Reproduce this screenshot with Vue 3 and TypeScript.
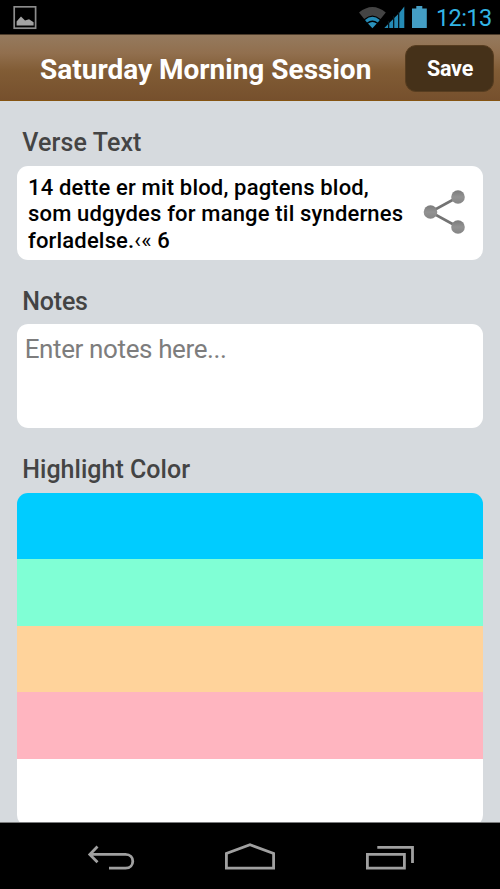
<script setup lang="ts">
import { ref } from 'vue'

const verseLines: string[] = [
  '14 dette er mit blod, pagtens blod,',
  'som udgydes for mange til syndernes',
]
const colors: string[] = ['#00ccff', '#80ffd5', '#ffd39b', '#ffb5c0', '#ffffff']
const notes = ref('')
</script>

<template>
  <div class="screen">
    <div class="status">
      <svg class="picture" width="24" height="24" viewBox="0 0 24 24">
        <rect x="1.2" y="0.8" width="21.4" height="21.4" fill="none" stroke="#8c8c8c" stroke-width="1.7" />
        <path d="M3.6 19.6V15.5L5.5 13.2L8 10.6L12 14.4L16 13.2L20.6 16.2V19.6Z" fill="#a3a3a3" />
      </svg>
      <svg class="signals" width="70" height="24" viewBox="0 0 70 24">
        <path d="M0 6.5Q13.4 -4.5 26.8 6.5L21.6 13Q13.4 6 5.2 13Z" fill="#444" />
        <path d="M6 14Q13.4 7.7 20.8 14L18.8 16.6Q13.4 12.4 8 16.6Z" fill="#258bb5" />
        <path d="M9 17.6Q13.4 14.4 17.8 17.6L13.4 22.2Z" fill="#2a92bd" />
        <path d="M25.3 22L29 18.3V22ZM30.2 22V17L34 13.2V22ZM35.2 22V12L39 8.2V22ZM40.2 22V7L45.3 0.5V22Z" fill="#258bb5" />
        <path d="M29.6 15V22M34.6 10V22M39.6 6V22" stroke="#061820" stroke-width="1" />
        <path d="M53 2.5H57.3V0H63.3V2.5H67.8V22H53Z" fill="#449ec4" />
      </svg>
      <span class="clock">12:13</span>
    </div>
    <header class="bar">
      <h1 class="title">Saturday Morning Session</h1>
      <button class="save" type="button">Save</button>
    </header>
    <main class="content">
      <h2 class="label verse-label">Verse Text</h2>
      <section class="card verse">
        <div class="verse-text">
          <div v-for="(line, i) in verseLines" :key="i">{{ line }}</div>
          <div>forladelse.<span class="quotes">‹«</span> 6</div>
        </div>
        <svg class="share" width="44" height="48" viewBox="0 0 44 48">
          <defs>
            <linearGradient id="dot" x1="0" y1="0" x2="0" y2="1">
              <stop offset="0" stop-color="#7b7b7b" />
              <stop offset="0.5" stop-color="#929292" />
              <stop offset="1" stop-color="#858585" />
            </linearGradient>
          </defs>
          <path d="M35 9L7.5 24L35 39" fill="none" stroke="#737373" stroke-width="2.6" />
          <circle cx="35" cy="9" r="6.8" fill="url(#dot)" />
          <circle cx="7.5" cy="24" r="6.8" fill="url(#dot)" />
          <circle cx="35" cy="39" r="6.8" fill="url(#dot)" />
        </svg>
      </section>
      <h2 class="label notes-label">Notes</h2>
      <textarea v-model="notes" class="card notes" placeholder="Enter notes here..."></textarea>
      <h2 class="label color-label">Highlight Color</h2>
      <div class="colors">
        <div v-for="color in colors" :key="color" class="swatch" :style="{ background: color }"></div>
      </div>
    </main>
    <nav class="nav">
      <svg width="500" height="66" viewBox="0 0 500 66" fill="none" stroke="#a0a0a0" stroke-width="2.8">
        <path d="M97.5 23.5L89.8 31.4L97.5 39.2M90 31.4H125.5C135.2 31.4 135.2 45.2 125.5 45.2H109" />
        <path d="M226.4 45.2V30.4L250 21.8L273.6 30.4V45.2Z" />
        <path d="M367.4 31.4H404.4V45.2H367.4ZM377.3 24.4H412.5V40" />
      </svg>
    </nav>
  </div>
</template>

<style>
body {
  margin: 0;
}
</style>

<style scoped>
.screen {
  width: 500px;
  height: 889px;
  display: flex;
  flex-direction: column;
  overflow: hidden;
  background: #000;
  font-family: Roboto, 'Liberation Sans', sans-serif;
}
.status {
  flex: none;
  height: 34px;
  display: flex;
  align-items: flex-start;
  box-sizing: border-box;
  padding: 6px 8px 0 13px;
}
.picture {
  flex: none;
}
.signals {
  flex: none;
  margin-left: auto;
}
.clock {
  width: 56px;
  margin-left: 7px;
  font-size: 23.5px;
  line-height: 24px;
  letter-spacing: -0.6px;
  color: #33b5e5;
  white-space: nowrap;
}
.bar {
  flex: none;
  height: 67px;
  box-sizing: border-box;
  display: flex;
  align-items: center;
  padding: 1px 6px 0 40px;
  background: linear-gradient(#957a5e 0, #916f4e 28%, #815c35 55%, #76502d 100%);
  border-top: 1px solid #4d3c2b;
  border-bottom: 1px solid #855412;
}
.title {
  width: 365px;
  margin: 3px 0 0;
  font-size: 28px;
  font-weight: 700;
  line-height: 34px;
  color: #fff;
  white-space: nowrap;
}
.save {
  width: 89px;
  height: 47px;
  padding: 0 0 0 1px;
  border: 1px solid #573d20;
  border-radius: 11px;
  background: #453119;
  color: #fff;
  font-family: inherit;
  font-size: 21.5px;
  font-weight: 700;
  letter-spacing: -0.2px;
}
.content {
  flex: none;
  height: 721px;
  box-sizing: border-box;
  padding: 24px 16.7px 0;
  overflow: hidden;
  background: #d6dade;
}
.label {
  height: 34px;
  margin: 0 0 0 5.6px;
  font-size: 25px;
  font-weight: 500;
  line-height: 36px;
  letter-spacing: 0.02px;
  color: #444;
  white-space: nowrap;
}
.card {
  box-sizing: border-box;
  width: 466.6px;
  border-radius: 11px;
  background: #fff;
}
.verse-label {
  margin-bottom: 7px;
  letter-spacing: 0.12px;
}
.verse {
  height: 94px;
  display: flex;
  justify-content: space-between;
  padding: 9px 16.6px 0 11.3px;
}
.verse-text {
  font-size: 22px;
  font-weight: 500;
  line-height: 26.4px;
  letter-spacing: 0.17px;
  color: #000;
  white-space: nowrap;
}
.quotes {
  font-weight: 400;
}
.share {
  flex: none;
  margin-top: 13px;
}
.notes-label {
  margin-top: 24px;
  margin-bottom: 6px;
  letter-spacing: -0.2px;
}
.notes {
  display: block;
  height: 104px;
  padding: 9px 8px;
  border: 0;
  resize: none;
  outline: none;
  font-family: inherit;
  font-size: 26px;
  line-height: 32px;
  letter-spacing: -0.38px;
}
.notes::placeholder {
  color: #7d7d7d;
  opacity: 1;
}
.color-label {
  margin-top: 24px;
  margin-bottom: 6.5px;
}
.colors {
  width: 466.6px;
  height: 333px;
  border-radius: 11px;
  overflow: hidden;
}
.swatch {
  height: 66.6px;
}
.nav {
  flex: none;
  height: 67px;
  box-sizing: border-box;
  border-top: 1px solid #7b7c7d;
}
</style>
